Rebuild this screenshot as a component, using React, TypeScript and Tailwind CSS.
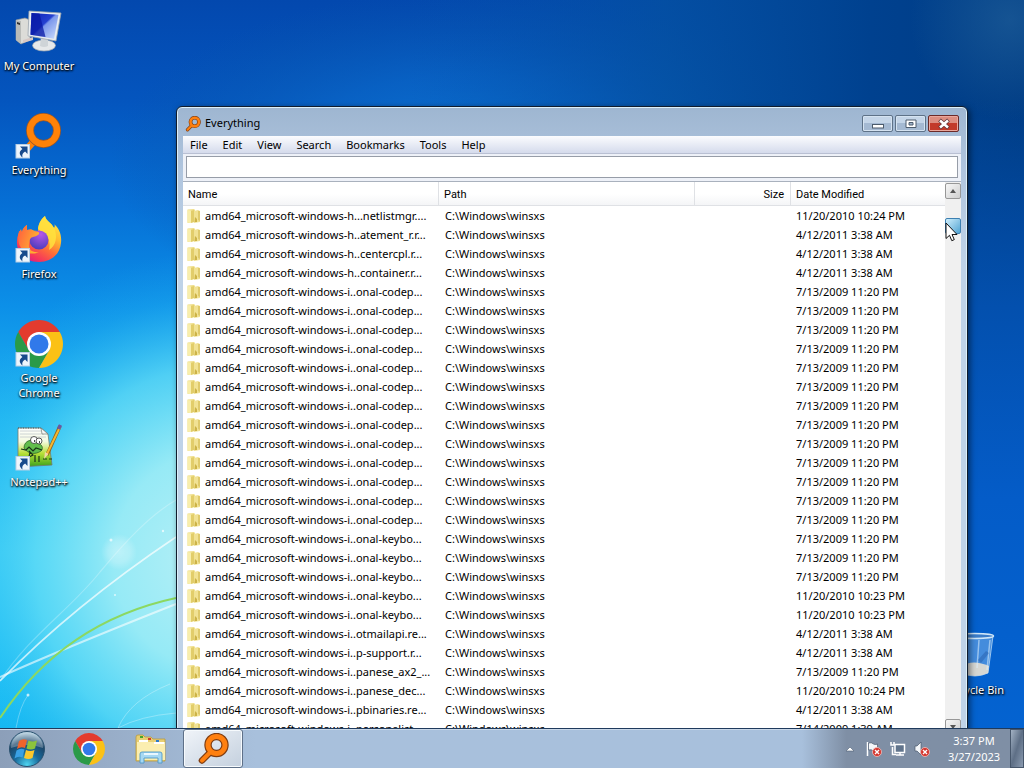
import React from "react";

type Entry = { name: string; modified: string };

const OLD = "7/13/2009 11:20 PM";
const APR = "4/12/2011 3:38 AM";

const repeat = (count: number, name: string, modified: string): Entry[] =>
  Array.from({ length: count }, () => ({ name, modified }));

const entries: Entry[] = [
  { name: "amd64_microsoft-windows-h...netlistmgr....", modified: "11/20/2010 10:24 PM" },
  { name: "amd64_microsoft-windows-h..atement_r.r...", modified: APR },
  { name: "amd64_microsoft-windows-h..centercpl.r...", modified: APR },
  { name: "amd64_microsoft-windows-h..container.r...", modified: APR },
  ...repeat(13, "amd64_microsoft-windows-i..onal-codep...", OLD),
  ...repeat(3, "amd64_microsoft-windows-i..onal-keybo...", OLD),
  ...repeat(2, "amd64_microsoft-windows-i..onal-keybo...", "11/20/2010 10:23 PM"),
  { name: "amd64_microsoft-windows-i..otmailapi.re...", modified: APR },
  { name: "amd64_microsoft-windows-i..p-support.r...", modified: APR },
  { name: "amd64_microsoft-windows-i..panese_ax2_...", modified: OLD },
  { name: "amd64_microsoft-windows-i..panese_dec...", modified: "11/20/2010 10:24 PM" },
  { name: "amd64_microsoft-windows-i..pbinaries.re...", modified: APR },
  { name: "amd64_microsoft-windows-i..personalist...", modified: "7/14/2009 1:39 AM" },
];

function Wallpaper() {
  return (
    <svg className="absolute inset-0 size-full" viewBox="0 0 1024 768" preserveAspectRatio="none" aria-hidden="true">
      <defs>
        <linearGradient id="sky" x1="0" y1="0" x2="0" y2="1">
          <stop offset="0" stopColor="#0348ae" />
          <stop offset=".13" stopColor="#0455be" />
          <stop offset=".27" stopColor="#0670d6" />
          <stop offset=".4" stopColor="#0c90e8" />
          <stop offset=".55" stopColor="#22b8f2" />
          <stop offset=".72" stopColor="#38ccf6" />
          <stop offset=".85" stopColor="#22c2f6" />
          <stop offset="1" stopColor="#0cb2f0" />
        </linearGradient>
        <radialGradient id="glow" gradientUnits="userSpaceOnUse" cx="0" cy="0" r="1" gradientTransform="translate(215 560) scale(290 310)">
          <stop offset="0" stopColor="#b8f0f6" />
          <stop offset=".35" stopColor="#9cecf6" stopOpacity=".95" />
          <stop offset=".62" stopColor="#62dcf6" stopOpacity=".75" />
          <stop offset=".85" stopColor="#30c0f2" stopOpacity=".2" />
          <stop offset="1" stopColor="#20b0f0" stopOpacity="0" />
        </radialGradient>
        <radialGradient id="beam" gradientUnits="userSpaceOnUse" cx="0" cy="0" r="1" gradientTransform="translate(470 160) scale(360 170)">
          <stop offset="0" stopColor="#0c78d8" />
          <stop offset=".5" stopColor="#0a66c6" stopOpacity=".7" />
          <stop offset="1" stopColor="#0a56a8" stopOpacity="0" />
        </radialGradient>
        <linearGradient id="right" x1="0" y1="0" x2="1" y2="0">
          <stop offset=".4" stopColor="#0552ac" stopOpacity="0" />
          <stop offset=".65" stopColor="#04509f" stopOpacity=".75" />
          <stop offset=".85" stopColor="#00418f" />
          <stop offset="1" stopColor="#003c84" />
        </linearGradient>
        <linearGradient id="rightLow" x1="0" y1="0" x2="0" y2="1">
          <stop offset=".13" stopColor="#0350ae" stopOpacity="0" />
          <stop offset=".4" stopColor="#0350ae" />
          <stop offset=".65" stopColor="#045cc8" />
          <stop offset="1" stopColor="#0464d2" />
        </linearGradient>
        <radialGradient id="corner" gradientUnits="userSpaceOnUse" cx="1010" cy="20" r="100">
          <stop offset="0" stopColor="#2a6aa0" stopOpacity=".5" />
          <stop offset="1" stopColor="#2a6aa0" stopOpacity="0" />
        </radialGradient>
        <radialGradient id="orbGlow">
          <stop offset="0" stopColor="#fff" stopOpacity=".35" />
          <stop offset=".6" stopColor="#fff" stopOpacity=".22" />
          <stop offset="1" stopColor="#fff" stopOpacity="0" />
        </radialGradient>
      </defs>
      <rect width="1024" height="768" fill="url(#sky)" />
      <rect width="1024" height="768" fill="url(#beam)" />
      <rect width="1024" height="768" fill="url(#right)" />
      <rect x="940" width="84" height="768" fill="url(#rightLow)" />
      <rect x="880" width="144" height="130" fill="url(#corner)" />
      <rect width="600" height="768" fill="url(#glow)" />
      <circle cx="119" cy="552" r="18" fill="url(#orbGlow)" />
      <g fill="none" stroke="#fff">
        <path d="M0 681C40 640 100 588 176 537" strokeWidth="1.600" opacity=".7" />
        <path d="M0 681C30 635 70 610 100 572C125 542 150 515 176 500" strokeWidth="1.200" opacity=".25" />
        <path d="M0 677Q60 650 176 604" strokeWidth="2" opacity=".6" />
        <path d="M118 728Q140 716 176 713M118 728Q130 700 170 684M16 728Q20 706 28 695" opacity=".3" />
      </g>
      <path d="M0 718Q64 622 176 598" fill="none" stroke="#8cd860" strokeWidth="2" />
      <g fill="#fff" opacity=".7">
        <circle cx="111" cy="540" r="1.500" />
        <circle cx="163" cy="531" r="1.200" />
        <circle cx="28" cy="695" r="1.500" />
        <circle cx="115" cy="595" r="1" />
      </g>
    </svg>
  );
}

function ShortcutBadge() {
  return (
    <g>
      <rect x="1" y="32.500" width="13.500" height="13.500" fill="#eef5fc" stroke="#b9cfe4" />
      <path d="M5 34.500h7.500V42l-2.400-2.400c-2.600 1.400-3.200 3.200-2.600 5.800C4 42.800 3.700 39.500 7.400 37z" fill="#174a8c" />
    </g>
  );
}

function ComputerIcon() {
  return (
    <svg viewBox="0 0 48 48" className="size-12" aria-hidden="true">
      <defs>
        <linearGradient id="screen" x1="0" y1="0" x2="1" y2="1">
          <stop offset="0" stopColor="#0a20b8" />
          <stop offset=".45" stopColor="#2440d0" />
          <stop offset=".5" stopColor="#7c98ec" />
          <stop offset="1" stopColor="#d0e0fc" />
        </linearGradient>
      </defs>
      <path d="M1 12l9-2 5 2v20L6 36l-5-4z" fill="#dcdcd8" stroke="#8e9498" strokeWidth=".7" />
      <path d="M1 12l5 1v23l-5-4z" fill="#b9bbb8" />
      <path d="M2 14l3 1v2l-3-1z" fill="#333" />
      <path d="M8 32l10-3v3L8 35z" fill="#d8c8c4" />
      <ellipse cx="29" cy="37.500" rx="11.500" ry="5.500" fill="#e6e8ea" stroke="#9ba3ab" strokeWidth=".7" />
      <path d="M26 29l7 2v7q-4 2-8 0z" fill="#cfd4d8" />
      <path d="M14 3l32 2-5 28-28-5z" fill="#e9edf0" stroke="#9ca5ad" strokeWidth=".8" />
      <path d="M16.500 5l27 1.800-4.500 24-23.500-4z" fill="url(#screen)" />
      <path d="M16.500 5l8 .6 6 23.400-15-2.200z" fill="#0818a4" opacity=".75" />
    </svg>
  );
}

function EverythingDesktopIcon() {
  return (
    <svg viewBox="0 0 48 48" className="size-12" aria-hidden="true">
      <path d="M19 29L11 38" stroke="#ff8208" strokeWidth="7" />
      <circle cx="28.500" cy="18.500" r="13.500" fill="none" stroke="#9b5728" strokeWidth="8" />
      <circle cx="28.500" cy="18.500" r="13.500" fill="none" stroke="#ff8208" strokeWidth="6.400" />
      <ShortcutBadge />
    </svg>
  );
}

function EverythingIcon({ className }: { className: string }) {
  return (
    <svg viewBox="0 0 32 32" className={className} aria-hidden="true">
      <path d="M13.500 19L5 27.500" stroke="#7f3d12" strokeWidth="6.500" strokeLinecap="round" />
      <circle cx="19.500" cy="12" r="8.500" fill="none" stroke="#7f3d12" strokeWidth="7.400" />
      <path d="M13.500 19L5 27.500" stroke="#ff8010" strokeWidth="4" strokeLinecap="round" />
      <circle cx="19.500" cy="12" r="8.500" fill="none" stroke="#ff8010" strokeWidth="5" />
    </svg>
  );
}

function FirefoxIcon() {
  return (
    <svg viewBox="0 0 48 48" className="size-12" aria-hidden="true">
      <defs>
        <linearGradient id="fox" x1=".85" y1="0" x2=".25" y2="1">
          <stop offset="0" stopColor="#fff04a" />
          <stop offset=".35" stopColor="#ffbd30" />
          <stop offset=".6" stopColor="#ff7137" />
          <stop offset=".85" stopColor="#f5355c" />
          <stop offset="1" stopColor="#d81c88" />
        </linearGradient>
        <radialGradient id="globe" cx=".6" cy=".2" r=".8">
          <stop offset="0" stopColor="#b657e8" />
          <stop offset="1" stopColor="#4d3ebd" />
        </radialGradient>
        <linearGradient id="foxHead" x1="0" y1="0" x2="1" y2=".5">
          <stop offset="0" stopColor="#ff5b40" />
          <stop offset="1" stopColor="#ffb42e" />
        </linearGradient>
      </defs>
      <path d="M30 0c1 5 6 6 9 12 1-2 1-3 0-4 5 4 8 11 7 19-1 12-11 19-22 19C10 46 1 37 2 25c0-5 2-9 4-12l1 3c1-4 3-6 5-7v5l11 1c0-7 3-12 7-15z" fill="url(#fox)" />
      <path d="M30 0c1 5 6 6 9 12 4 8 2 18-5 22 2-8-1-14-6-17-4-3-5-4-5-5 1-5 4-10 7-12z" fill="#ffe23e" opacity=".85" />
      <circle cx="24" cy="24" r="9.500" fill="url(#globe)" />
      <path d="M4 15l3 1c1-4 3-6 5-7v5c3-1 5-1 7 1 3 1 6 0 5 3-1 2-7 3-8 4-2 2-1 3-2 5-1 7 4 10 10 9-8 4-17 0-20-8-1-5-1-9 0-13z" fill="url(#foxHead)" />
      <ShortcutBadge />
    </svg>
  );
}

function ChromeIcon({ className, shortcut = false }: { className: string; shortcut?: boolean }) {
  return (
    <svg viewBox="0 0 48 48" className={className} aria-hidden="true">
      <path d="M3.220 12A24 24 0 0 1 44.780 12H24L13.600 30z" fill="#e33b2e" />
      <path d="M3.220 12A24 24 0 0 0 24 48L34.400 30H13.600z" fill="#2a9a48" />
      <path d="M24 48A24 24 0 0 0 44.780 12H24L34.400 30z" fill="#fbc116" />
      <circle cx="24" cy="24" r="12" fill="#fff" />
      <circle cx="24" cy="24" r="9.500" fill="#3179ea" />
      {shortcut && <ShortcutBadge />}
    </svg>
  );
}

function NotepadIcon() {
  return (
    <svg viewBox="0 0 48 48" className="size-12" aria-hidden="true">
      <defs>
        <linearGradient id="grass" x1="0" y1="0" x2="0" y2="1">
          <stop offset="0" stopColor="#fff" />
          <stop offset=".35" stopColor="#f4fae0" />
          <stop offset=".65" stopColor="#b8e038" />
          <stop offset="1" stopColor="#38a018" />
        </linearGradient>
      </defs>
      <path d="M3 4h23l7 6 4 31-34 2z" fill="url(#grass)" stroke="#747a70" strokeWidth=".8" />
      <path d="M5 7h21M5 10h24M5 13h26" stroke="#c3c9cc" strokeWidth=".8" />
      <path d="M26 4l1 6h6z" fill="#f7f7f7" stroke="#747a70" strokeWidth=".7" />
      <path d="M3 4h23" stroke="#555" strokeDasharray="1 1.500" />
      <path d="M9 24c0-8 9-10 13-5 5 1 7 5 4 8-6 4-13 3-17-3z" fill="#62bd4c" stroke="#245a22" strokeWidth=".7" />
      <circle cx="19" cy="16" r="3.500" fill="#fff" stroke="#333" strokeWidth=".8" />
      <circle cx="24" cy="17" r="3" fill="#fff" stroke="#333" strokeWidth=".8" />
      <path d="M19 17h1M24 18h1" stroke="#111" strokeWidth="1.500" />
      <path d="M6 25l5 1 3-3 4 4 3-3 6 2M14 27l4 4-4 2 1-5M20 31v7M24 32v6M28 35h4m2 0h3" fill="none" stroke="#183418" strokeWidth="1.200" />
      <path d="M45 2L32 31" stroke="#8e641d" strokeWidth="3.400" />
      <path d="M45 3L32 30" stroke="#f5b730" strokeWidth="2" />
      <path d="M45.500 1l-2 4" stroke="#6958a2" strokeWidth="3.400" />
      <path d="M30 28l3.500 2-4.500 5z" fill="#f4d9a5" />
      <ShortcutBadge />
    </svg>
  );
}

function RecycleIcon() {
  return (
    <svg viewBox="0 0 48 48" className="size-12" aria-hidden="true">
      <path d="M5 4h37l-5 37q-13 6-27 0z" fill="#83b8ec" fillOpacity=".5" stroke="#b9d9f5" strokeWidth=".8" />
      <path d="M10 34q12-7 28 0l-1 7q-13 6-26 0z" fill="#e7dfd2" opacity=".9" />
      <ellipse cx="23.500" cy="4" rx="19" ry="2.500" fill="#3b7cc8" stroke="#cfe6f8" strokeWidth="1.500" />
      <path d="M28 8l-2 28M39 8l-3 30" stroke="#dff0fd" strokeWidth="1.500" opacity=".55" />
      <path d="M27 28l8-9 3 2-8 10z" fill="#285fae" opacity=".5" />
    </svg>
  );
}

function DesktopIcon({ label, children }: { label: string; children: React.ReactNode }) {
  return (
    <button
      type="button"
      className="flex h-[104px] w-[78px] flex-col items-center gap-0.5 text-[11px] leading-[15px] text-white [text-shadow:1px_1px_2px_#000,0_1px_2px_#000]"
    >
      {children}
      <span className="text-center">{label}</span>
    </button>
  );
}

function FolderIcon() {
  return (
    <svg viewBox="0 0 16 16" className="size-4 shrink-0" aria-hidden="true">
      <path d="M1.500 1.500L8 1l1 1v12l-7.500 1z" fill="#efdf8c" />
      <path d="M8 3l4-1 2 1v11l-6 1z" fill="#f1e294" />
      <path d="M1.500 2l3.500.5V15l-3.500-.5z" fill="#f8eeac" />
      <path d="M5 3l3-1v12l-3 1z" fill="#e2cd6a" />
      <path d="M12 3v9l2 1V3z" fill="#dfca6c" />
      <path d="M9 9l2 2v3H8.500z" fill="#cdb347" />
    </svg>
  );
}

const captionBtn =
  "flex h-[17px] w-[31px] items-center justify-center rounded-[2px] border border-[#5e7288] bg-linear-to-b from-[#c4d5e8] from-50% to-[#a4b9d2] to-50% shadow-[inset_0_0_0_1px_#d5e3f1]";

function TitleBar() {
  return (
    <header className="flex h-[29px] items-center gap-1 pt-1 pl-0.5">
      <EverythingIcon className="size-4" />
      <h1 className="flex-1 text-[11px] text-black">Everything</h1>
      <div className="flex gap-0.5 pr-0.5">
        <button type="button" aria-label="Minimize" className={captionBtn}>
          <svg width="12" height="12" viewBox="0 0 12 12"><rect x=".5" y="6.500" width="11" height="3.500" fill="#fff" stroke="#4c5b6c" /></svg>
        </button>
        <button type="button" aria-label="Maximize" className={captionBtn}>
          <svg width="12" height="12" viewBox="0 0 12 12"><path d="M1 2h10v7.500H1z" fill="#fff" stroke="#4c5b6c" /><path d="M4 4.500h4V7H4z" fill="#9fb3cb" stroke="#4c5b6c" /></svg>
        </button>
        <button
          type="button"
          aria-label="Close"
          className="flex h-[17px] w-[31px] items-center justify-center rounded-[2px] border border-[#6c2a28] bg-linear-to-b from-[#dc8d80] from-50% to-[#c23a2a] to-50% shadow-[inset_0_0_0_1px_#eaa79c]"
        >
          <svg width="12" height="12" viewBox="0 0 12 12"><path d="M1.500 2l9 8M10.500 2l-9 8" stroke="#62363a" strokeWidth="4" /><path d="M2 2.500l8 7M10 2.500l-8 7" stroke="#fff" strokeWidth="2.600" /></svg>
        </button>
      </div>
    </header>
  );
}

const scrollBtn =
  "flex size-4 shrink-0 items-center justify-center rounded-[2px] border border-[#979797] bg-linear-to-br from-[#f7f7f7] to-[#cfcfcf]";

function EverythingWindow() {
  return (
    <section
      aria-label="Everything"
      className="absolute top-[106px] right-[56px] -bottom-4 left-[176px] flex flex-col rounded-t-md border border-[#101c2c] bg-linear-to-b from-[#9eb6d1] via-[#b0c5de] via-10% to-[#bfd3e8] to-25% px-1.5 pb-2 shadow-[inset_0_0_0_1px_#dcf0fa,2px_2px_6px_rgba(0,0,0,0.5)]"
    >
      <TitleBar />
      <nav aria-label="Menu" className="flex h-[18px] shrink-0 items-center gap-[15px] border-b border-[#b9c0d3] bg-linear-to-b from-[#fbfcfe] to-[#d5dbec] pl-[7px] text-[11px] leading-4 text-black">
        {["File", "Edit", "View", "Search", "Bookmarks", "Tools", "Help"].map((m) => (
          <button type="button" key={m}>{m}</button>
        ))}
      </nav>
      <div className="shrink-0 border-b border-[#a9b1bd] bg-[#eef1f8] px-[3px] pt-0.5 pb-[3px]">
        <input type="text" aria-label="Search" className="block h-[22px] w-full border border-[#979da8] bg-white px-1 text-[11px] outline-none" />
      </div>
      <div className="flex min-h-0 flex-1 bg-white">
        <div className="min-w-0 flex-1 overflow-hidden">
          <table className="w-full table-fixed border-separate border-spacing-0 text-left text-[11px] leading-[15px] text-black">
            <colgroup>
              <col className="w-[256px]" />
              <col className="w-[256px]" />
              <col className="w-[96px]" />
              <col />
            </colgroup>
            <thead>
              <tr className="h-6 bg-linear-to-b from-white from-50% to-[#f3f4f6] font-['Roboto',sans-serif]">
                <th className="border-r border-b border-[#dfe1e5] p-0 pt-0.5 pl-[5px] font-normal">Name</th>
                <th className="border-r border-b border-[#dfe1e5] p-0 pt-0.5 pl-[5px] font-normal">Path</th>
                <th className="border-r border-b border-[#dfe1e5] p-0 pt-0.5 pr-1.5 text-right font-normal">Size</th>
                <th className="border-b border-[#dfe1e5] p-0 pt-0.5 pl-[5px] font-normal">Date Modified</th>
              </tr>
            </thead>
            <tbody>
              {entries.map((e, i) => (
                <tr key={i} className="h-[19px]">
                  <td className="p-0 pl-[3px]">
                    <div className="flex items-center gap-[3px] whitespace-nowrap">
                      <FolderIcon />
                      <span>{e.name}</span>
                    </div>
                  </td>
                  <td className="p-0 pl-1.5">C:\Windows\winsxs</td>
                  <td className="p-0" />
                  <td className="p-0 pl-[5px] whitespace-nowrap">{e.modified}</td>
                </tr>
              ))}
            </tbody>
          </table>
        </div>
        <div className="flex w-4 shrink-0 flex-col bg-[#f0f0f0] pt-px">
          <button type="button" aria-label="Scroll up" className={scrollBtn}>
            <svg width="6" height="4" viewBox="0 0 6 4"><path d="M0 4l3-4 3 4z" fill="#555" /></svg>
          </button>
          <div className="flex-1 pt-[19px]">
            <div className="h-4 rounded-[2px] border border-[#3c7fb1] bg-linear-to-br from-[#cdeefc] to-[#4ea4d2]" />
          </div>
          <button type="button" aria-label="Scroll down" className={scrollBtn}>
            <svg width="6" height="4" viewBox="0 0 6 4"><path d="M0 0l3 4 3-4z" fill="#555" /></svg>
          </button>
        </div>
      </div>
    </section>
  );
}

function StartOrb() {
  return (
    <svg viewBox="0 0 38 38" className="size-[38px]" aria-hidden="true">
      <defs>
        <radialGradient id="orb" cx=".5" cy=".95" r=".9">
          <stop offset="0" stopColor="#4fd4f0" />
          <stop offset=".4" stopColor="#186a9c" />
          <stop offset=".75" stopColor="#1c4568" />
          <stop offset="1" stopColor="#9fc0d4" />
        </radialGradient>
      </defs>
      <circle cx="19" cy="19" r="17.500" fill="url(#orb)" stroke="#29506e" />
      <path d="M3 18a16 16 0 0 1 32 0q-16-6-32 0z" fill="#fff" opacity=".28" />
      <path d="M11 11q4-3 8-1l-2 8q-4-2-8 1z" fill="#f0642c" />
      <path d="M20.500 10.500q4 2 8.500 0l-2 8q-4 2-8.500 0z" fill="#8cc43c" />
      <path d="M8.500 20.500q4-3 8-1l-2 8q-4-2-8 1z" fill="#3aa0e4" />
      <path d="M18 20q4 2 8.500 0l-2 8q-4 2-8.500 0z" fill="#fcc82c" />
    </svg>
  );
}

function ExplorerIcon() {
  return (
    <svg viewBox="0 0 32 30" className="h-[30px] w-8" aria-hidden="true">
      <path d="M1 3q0-2 2-2h5l2 2h6l2 2h12v22H1z" fill="#e8cf73" stroke="#b99a3c" strokeWidth=".8" />
      <path d="M2 8h28v18H2z" fill="#fbeeb0" />
      <path d="M4 6h9v2H4zM19 8h10v2H19z" fill="#fff" />
      <path d="M5 2h3v2H5z" fill="#43a52c" />
      <path d="M13 4h3v2h-3z" fill="#d43b2a" />
      <path d="M21 6h3v2h-3z" fill="#2c7ac8" />
      <path d="M5 29V20q0-2 2-2h18q2 0 2 2v9h-4v-5H9v5z" fill="#a6d8f2" stroke="#4f98c8" strokeWidth=".9" />
      <path d="M9 20h14" stroke="#e8f7ff" strokeWidth="2" />
    </svg>
  );
}

function ErrorMark({ cx, cy }: { cx: number; cy: number }) {
  return (
    <g>
      <circle cx={cx} cy={cy} r="4.500" fill="#d4342c" stroke="#f2c4c0" strokeWidth=".8" />
      <path d={`M${cx - 2} ${cy - 2}l4 4m0-4l-4 4`} stroke="#fff" strokeWidth="1.400" />
    </g>
  );
}

function Taskbar() {
  return (
    <footer className="relative flex h-10 shrink-0 items-stretch border-t border-[#1f3a5c] bg-linear-to-r from-[#8c9fb9] via-[#a8c0dc] via-25% to-[#a8c0dc] to-75% shadow-[inset_0_1px_0_#c9d8e9]">
      <button type="button" aria-label="Start" className="flex w-[54px] items-center justify-center">
        <StartOrb />
      </button>
      <button type="button" aria-label="Google Chrome" className="ml-1 flex w-[62px] items-center justify-center">
        <ChromeIcon className="size-8" />
      </button>
      <button type="button" aria-label="Windows Explorer" className="flex w-[62px] items-center justify-center">
        <ExplorerIcon />
      </button>
      <button
        type="button"
        aria-label="Everything"
        className="ml-px flex w-[60px] items-center justify-center rounded-[3px] border border-[#5e7088] bg-linear-to-br from-[#f0f4f9] to-[#c4d0de] shadow-[inset_0_0_0_1px_#f6fafd]"
      >
        <EverythingIcon className="size-8" />
      </button>
      <div className="ml-auto flex items-center justify-end bg-linear-to-r from-transparent to-[#7f8fa5] to-20% pl-10">
        <button type="button" aria-label="Show hidden icons" className="mr-2">
          <svg width="16" height="16" viewBox="0 0 16 16"><path d="M4 10l4-4 4 4z" fill="#fff" stroke="#4f5f74" strokeWidth=".6" /></svg>
        </button>
        <div className="mr-4 flex gap-2">
          <svg width="16" height="18" viewBox="0 0 16 18" role="img" aria-label="Action Center">
            <path d="M1.500 2v14" stroke="#fff" strokeWidth="1.500" />
            <path d="M2.500 3q3-1 5 1 2 1 4 0v7q-2 1-4 0-2-2-5-1z" fill="#f3f6f9" stroke="#49586b" strokeWidth=".7" />
            <ErrorMark cx={11} cy={12} />
          </svg>
          <svg width="16" height="18" viewBox="0 0 16 18" role="img" aria-label="Network">
            <path d="M5 4.500h9.500v8H5z" fill="#61748c" stroke="#fff" strokeWidth="1.500" />
            <path d="M6 15h8M10 13v2M2.500 7v7.500H6M1 2v3h3V2" fill="none" stroke="#fff" strokeWidth="1.500" />
          </svg>
          <svg width="16" height="18" viewBox="0 0 16 18" role="img" aria-label="Volume muted">
            <path d="M1 6h2l4-4v13l-4-4H1z" fill="#f3f6f9" stroke="#49586b" strokeWidth=".7" />
            <ErrorMark cx={11} cy={12} />
          </svg>
        </div>
        <button type="button" className="mr-2 flex w-14 flex-col items-center text-[11px] leading-4 text-white">
          <time>3:37 PM</time>
          <time>3/27/2023</time>
        </button>
        <button
          type="button"
          aria-label="Show desktop"
          className="w-3.5 self-stretch border border-[#46566b] bg-linear-to-br from-[#a3b2c4] via-[#5e6f86] to-[#8b9bb0]"
        />
      </div>
    </footer>
  );
}

export default function App() {
  return (
    <div className="relative flex h-screen flex-col overflow-hidden font-['Noto_Sans','Open_Sans',sans-serif]">
      <Wallpaper />
      <main className="relative min-h-0 flex-1 overflow-hidden">
        <div className="flex flex-col items-start pt-2">
          <DesktopIcon label="My Computer"><ComputerIcon /></DesktopIcon>
          <DesktopIcon label="Everything"><EverythingDesktopIcon /></DesktopIcon>
          <DesktopIcon label="Firefox"><FirefoxIcon /></DesktopIcon>
          <DesktopIcon label="Google Chrome"><ChromeIcon className="size-12" shortcut /></DesktopIcon>
          <DesktopIcon label="Notepad++"><NotepadIcon /></DesktopIcon>
        </div>
        <div className="absolute right-2.5 -bottom-2">
          <DesktopIcon label="Recycle Bin"><RecycleIcon /></DesktopIcon>
        </div>
        <EverythingWindow />
        <svg className="absolute top-[222px] right-[66px]" width="13" height="20" viewBox="0 0 13 20" aria-hidden="true">
          <path d="M1 1v15.500l3.500-3.200 2.300 5.400 2.500-1.100L7 12.500h5z" fill="#fff" stroke="#111" />
        </svg>
      </main>
      <Taskbar />
    </div>
  );
}
